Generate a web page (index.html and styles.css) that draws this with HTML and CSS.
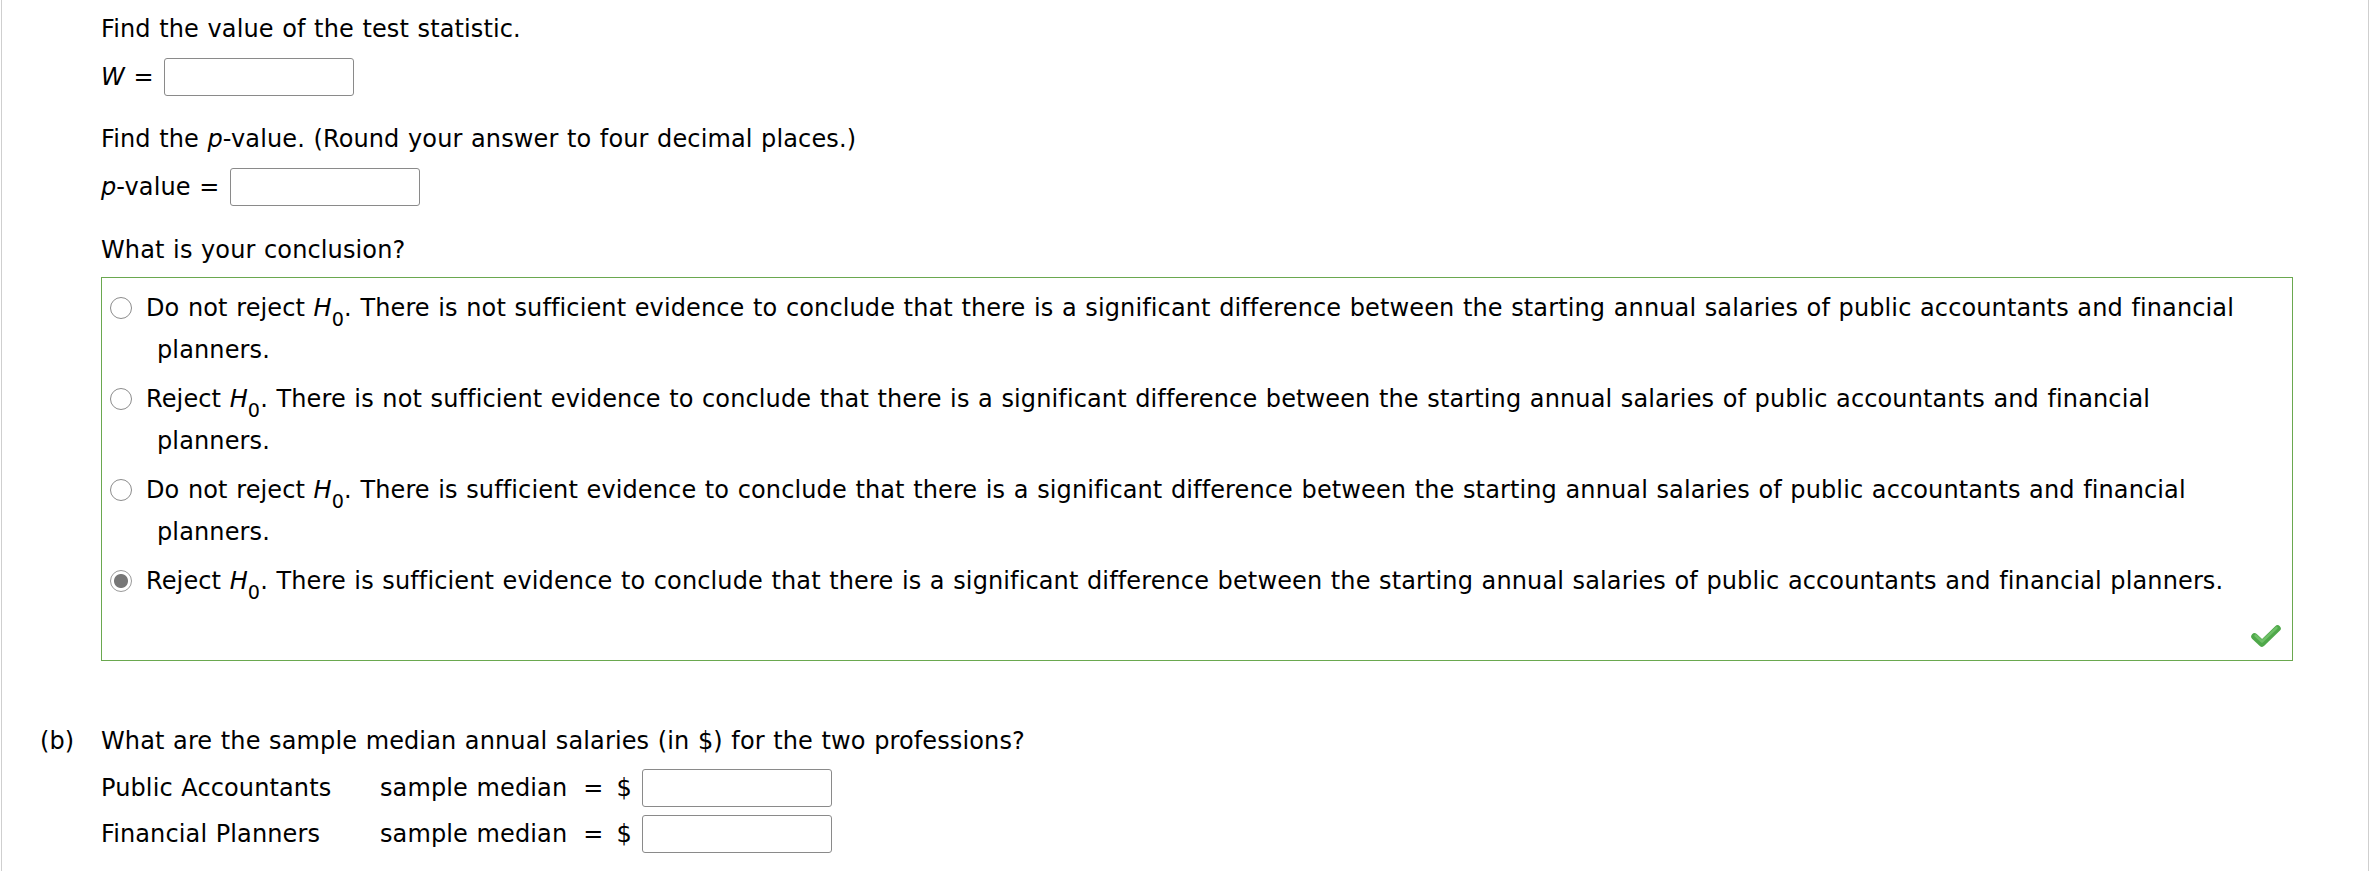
FILE: index.html
```html
<!DOCTYPE html>
<html lang="en">
<head>
<meta charset="utf-8">
<title>Question</title>
<link rel="stylesheet" href="styles.css">
</head>
<body>
<div class="page">
  <div class="part">
    <div class="tag"></div>
    <div class="body">
      <p class="line first">Find the value of the test statistic.</p>
      <div class="row r-w"><span class="lead"><i>W</i> =</span><span class="box"></span></div>
      <p class="line p2">Find the <i>p</i>-value. (Round your answer to four decimal places.)</p>
      <div class="row r-p"><span class="lead"><i>p</i>-value =</span><span class="box"></span></div>
      <p class="line p3">What is your conclusion?</p>
      <div class="answer">
        <div class="opts">
          <div class="opt"><span class="radio"></span>Do not reject <i>H</i><sub>0</sub>. There is not sufficient evidence to conclude that there is a significant difference between the starting annual salaries of public accountants and financial planners.</div>
          <div class="opt"><span class="radio"></span>Reject <i>H</i><sub>0</sub>. There is not sufficient evidence to conclude that there is a significant difference between the starting annual salaries of public accountants and financial planners.</div>
          <div class="opt"><span class="radio"></span>Do not reject <i>H</i><sub>0</sub>. There is sufficient evidence to conclude that there is a significant difference between the starting annual salaries of public accountants and financial planners.</div>
          <div class="opt"><span class="radio on"></span>Reject <i>H</i><sub>0</sub>. There is sufficient evidence to conclude that there is a significant difference between the starting annual salaries of public accountants and financial planners.</div>
        </div>
        <div class="mark">
          <svg width="30" height="24" viewBox="0 0 30 24" aria-hidden="true">
            <path d="M3.5 12.5 L11 19.5 L26.5 4.5" fill="none" stroke="#4fa84a" stroke-width="6.5" stroke-linejoin="round" stroke-linecap="round"/>
            <path d="M4.5 11.5 L11 17.5 L25.5 3.8" fill="none" stroke="#7ccb73" stroke-width="2.5" stroke-linejoin="round" stroke-linecap="round" opacity="0.7"/>
          </svg>
        </div>
      </div>
    </div>
  </div>
  <div class="part part-b">
    <div class="tag">(b)</div>
    <div class="body">
      <p class="line">What are the sample median annual salaries (in $) for the two professions?</p>
      <div class="row med m1"><span class="who">Public Accountants</span><span class="what">sample median</span><span class="eq">=</span><span class="dol">$</span><span class="box"></span></div>
      <div class="row med m2"><span class="who">Financial Planners</span><span class="what">sample median</span><span class="eq">=</span><span class="dol">$</span><span class="box"></span></div>
    </div>
  </div>
</div>
</body>
</html>
```

FILE: styles.css
```css
html, body {
  margin: 0;
  padding: 0;
  background: #fff;
}

body {
  font-family: "DejaVu Sans", Verdana, sans-serif;
  font-size: 24px;
  letter-spacing: 0.12px;
  word-spacing: 0.8px;
  color: #000;
}

.page {
  box-sizing: border-box;
  margin-left: 1px;
  width: 2368px;
  min-height: 871px;
  border-left: 1px solid #cfcfcf;
  border-right: 1px solid #cfcfcf;
  padding: 8px 75px 0 38px;
}

.part {
  display: grid;
  grid-template-columns: 61px 1fr;
}

.tag {
  line-height: 42px;
}

.line {
  margin: 0;
  line-height: 42px;
}

.p2 { margin-top: 22px; }
.p3 { margin-top: 23px; }

.row {
  display: flex;
  align-items: center;
  height: 38px;
  line-height: 42px;
}

.r-w { margin-top: 8px; }
.r-p { margin-top: 8px; }

.lead { white-space: nowrap; }
.r-w .box { margin-left: 10px; }
.r-p .box { margin-left: 11px; }

.box {
  box-sizing: border-box;
  display: inline-block;
  width: 190px;
  height: 38px;
  border: 1px solid #8a8a8a;
  border-radius: 3px;
  background: #fff;
}

.answer {
  margin-top: 6px;
  border: 1px solid #6aa84f;
  padding: 9px 11px 12px 0;
}

.opts {
  padding-right: 32px;
  padding-bottom: 7px;
}

.opt {
  line-height: 42px;
  padding-left: 55px;
  text-indent: -47px;
  margin-bottom: 7px;
}

.opt:last-child { margin-bottom: 0; }

sub {
  font-size: 0.8em;
  line-height: 0;
  vertical-align: -10px;
}

.radio {
  display: inline-block;
  box-sizing: border-box;
  width: 22px;
  height: 22px;
  border: 1.5px solid #8c8c8c;
  border-radius: 50%;
  background: #fff;
  vertical-align: -3px;
  margin-right: 14px;
  text-indent: 0;
}

.radio.on {
  background: radial-gradient(circle, #777 0, #777 6.5px, #fff 7.5px);
  border-color: #9a9a9a;
}

.mark {
  display: flex;
  justify-content: flex-end;
  margin-top: 15px;
  height: 24px;
}

.part-b { margin-top: 59px; }

.med .who { width: 279px; white-space: nowrap; }
.med .what { white-space: nowrap; }
.med .eq { margin-left: 16px; }
.med .dol { margin-left: 13px; }
.med .box { margin-left: 10px; }

.m1 { margin-top: 7px; }
.m2 { margin-top: 8px; }
```
